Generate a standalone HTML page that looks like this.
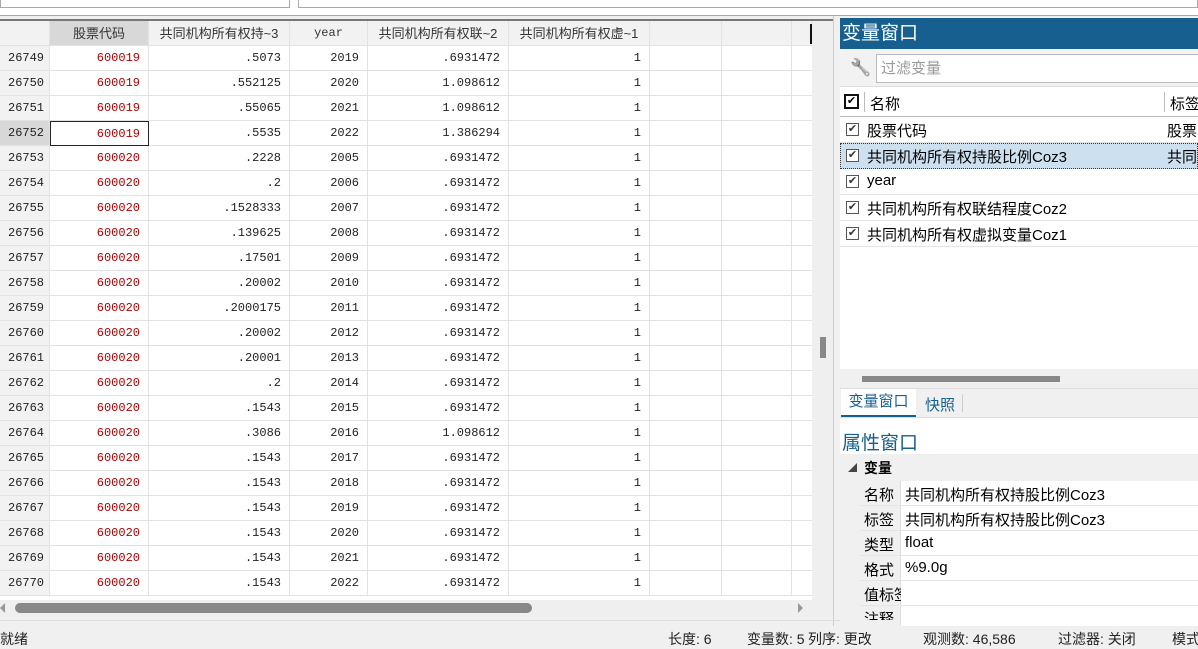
<!DOCTYPE html>
<html><head><meta charset="utf-8"><style>
*{margin:0;padding:0;box-sizing:border-box}
body{width:1198px;height:646px;background:#f0f0f0;position:relative;overflow:hidden;font-family:"Liberation Sans","Noto Sans CJK SC",sans-serif}
.a{position:absolute;white-space:nowrap}
.mono{font-family:"Liberation Mono","Noto Sans CJK SC",monospace;font-size:12px}
.cell{position:absolute;height:25px;line-height:25px;border-right:1px solid #e2e2e2;border-bottom:1px solid #e2e2e2;text-align:right;padding-right:8px;background:#fff;color:#222}
.hd{background:#f2f2f2;text-align:center;padding:0;font-size:13px;color:#333}
.rn{background:#f2f2f2;text-align:left;padding-left:8px}
.cb{position:absolute;width:13px;height:13px;border:1px solid #555;background:#fff;font-size:11px;line-height:11px;text-align:center;color:#333}
.rt{position:absolute;left:840px;width:358px;font-size:14px;color:#222}
.st{position:absolute;top:629px;font-size:14px;color:#222;white-space:nowrap}
</style></head><body>
<div class="a" style="left:0;top:0;width:1198px;height:16px;background:#fff;border-bottom:1px solid #aaa"></div>
<div class="a" style="left:0;top:0;width:290px;height:8px;border:1px solid #aaa;border-top:none;background:#fff"></div>
<div class="a" style="left:298px;top:0;width:900px;height:8px;border:1px solid #aaa;border-top:none;background:#fff"></div>
<div class="a" style="left:0;top:19px;width:833px;height:2px;background:#777"></div>
<div class="a" style="left:0;top:21px;width:812px;height:579px;background:#fff;overflow:hidden" id="g">
<div class="cell hd rn" style="left:0;top:0;width:50px"></div>
<div class="cell hd" style="left:50px;top:0;width:99px;background:#d8d8d8">股票代码</div>
<div class="cell hd" style="left:149px;top:0;width:141px">共同机构所有权持~3</div>
<div class="cell hd mono" style="left:290px;top:0;width:78px;font-size:12px">year</div>
<div class="cell hd" style="left:368px;top:0;width:141px">共同机构所有权联~2</div>
<div class="cell hd" style="left:509px;top:0;width:141px">共同机构所有权虚~1</div>
<div class="cell hd" style="left:650px;top:0;width:72px"></div>
<div class="cell hd" style="left:722px;top:0;width:70px"></div>
<div class="cell hd" style="left:792px;top:0;width:20px"></div>
<div class="a" style="left:810px;top:3px;width:2px;height:20px;background:#111"></div>
</div>
<div class="a" style="left:812px;top:21px;width:21px;height:579px;background:#efefef"></div>
<div class="a" style="left:820px;top:337px;width:6px;height:21px;background:#888"></div>
<div class="a" style="left:833px;top:16px;width:7px;height:610px;background:#f0f0f0;border-left:1px solid #ccc"></div>
<div class="a" style="left:0;top:600px;width:833px;height:17px;background:#efefef"></div>
<div class="a" style="left:15px;top:603px;width:517px;height:10px;background:#888;border-radius:5px"></div>
<div class="a" style="left:0;top:603px;width:0;height:0;border-top:5px solid transparent;border-bottom:5px solid transparent;border-right:5px solid #999"></div>
<div class="a" style="left:798px;top:603px;width:0;height:0;border-top:5px solid transparent;border-bottom:5px solid transparent;border-left:5px solid #999"></div>
<div class="a" style="left:0;top:620px;width:1198px;height:1px;background:#ddd"></div>
<div class="st" style="left:0">就绪</div>
<div class="st" style="left:668px">长度: 6</div>
<div class="st" style="left:747px">变量数: 5</div>
<div class="st" style="left:808px">列序: 更改</div>
<div class="st" style="left:923px">观测数: 46,586</div>
<div class="st" style="left:1058px">过滤器: 关闭</div>
<div class="st" style="left:1172px">模式</div>
<div class="a" style="left:840px;top:18px;width:358px;height:608px;background:#fff"></div>
<div class="rt" style="top:18px;height:31px;background:#165f8f;color:#fff;font-size:19px;line-height:31px;padding-left:2px">变量窗口</div>
<div class="rt" style="top:49px;height:38px;background:#f2f2f2;border-bottom:1px solid #ddd"></div>
<div class="a" style="left:850px;top:58px;font-size:17px;color:#888;filter:grayscale(1)">🔧</div>
<div class="a" style="left:876px;top:54px;width:330px;height:29px;border:1px solid #bbb;background:#fff;font-size:15px;color:#999;line-height:27px;padding-left:4px">过滤变量</div>
<div class="rt" style="top:88px;height:29px;border-bottom:1px solid #bbb"></div>
<div class="cb" style="left:844px;top:94px;border:2px solid #111;width:15px;height:15px;color:#000">✔</div>
<div class="a" style="left:864px;top:92px;width:1px;height:20px;background:#bbb"></div>
<div class="a" style="left:870px;top:93px;font-size:15px">名称</div>
<div class="a" style="left:1164px;top:92px;width:1px;height:20px;background:#bbb"></div>
<div class="a" style="left:1170px;top:93px;font-size:15px">标签</div>
<div class="rt" style="top:143px;height:26px;background:#cde0f0;border:1px dotted #333"></div>
<div class="rt" style="top:117px;height:26px;border-bottom:1px solid #e5e5e5"></div>
<div class="rt" style="top:169px;height:26px;border-bottom:1px solid #e5e5e5"></div>
<div class="rt" style="top:195px;height:26px;border-bottom:1px solid #e5e5e5"></div>
<div class="rt" style="top:221px;height:26px;border-bottom:1px solid #e5e5e5"></div>
<div class="cb" style="left:846px;top:123px">✔</div><div class="a" style="left:867px;top:120px;font-size:15px">股票代码</div><div class="a" style="left:1167px;top:120px;font-size:15px">股票</div>
<div class="cb" style="left:846px;top:149px">✔</div><div class="a" style="left:867px;top:146px;font-size:15px">共同机构所有权持股比例Coz3</div><div class="a" style="left:1167px;top:146px;font-size:15px">共同</div>
<div class="cb" style="left:846px;top:175px">✔</div><div class="a" style="left:867px;top:172px;font-size:15px">year</div>
<div class="cb" style="left:846px;top:201px">✔</div><div class="a" style="left:867px;top:198px;font-size:15px">共同机构所有权联结程度Coz2</div>
<div class="cb" style="left:846px;top:227px">✔</div><div class="a" style="left:867px;top:224px;font-size:15px">共同机构所有权虚拟变量Coz1</div>
<div class="rt" style="top:369px;height:19px;background:#f0f0f0"></div>
<div class="a" style="left:862px;top:376px;width:198px;height:6px;background:#888"></div>
<div class="rt" style="top:388px;height:30px;background:#f0f0f0;border-top:1px solid #ddd;border-bottom:1px solid #ddd"></div>
<div class="a" style="left:841px;top:389px;width:75px;height:28px;background:#fff;border-bottom:2px solid #165f8f;color:#165f8f;font-size:15px;line-height:26px;text-align:center">变量窗口</div>
<div class="a" style="left:925px;top:394px;font-size:15px;color:#165f8f">快照</div>
<div class="a" style="left:962px;top:394px;width:1px;height:18px;background:#ccc"></div>
<div class="a" style="left:842px;top:428px;font-size:19px;color:#165f8f">属性窗口</div>
<div class="rt" style="top:454px;height:172px;background:#f0f0f0"></div>
<div class="a" style="left:848px;top:461px;font-size:9px;color:#444">◢</div>
<div class="a" style="left:864px;top:458px;font-size:14px;font-weight:bold">变量</div>
<div class="a" style="left:860px;top:481px;width:338px;height:145px;background:#fff"></div>
<div class="a" style="left:860px;top:481px;width:41px;height:145px;background:#f0f0f0;border-right:1px solid #ddd"></div>
<div class="a" style="left:860px;top:505px;width:338px;height:1px;background:#e5e5e5"></div>
<div class="a" style="left:860px;top:530px;width:338px;height:1px;background:#e5e5e5"></div>
<div class="a" style="left:860px;top:555px;width:338px;height:1px;background:#e5e5e5"></div>
<div class="a" style="left:860px;top:580px;width:338px;height:1px;background:#e5e5e5"></div>
<div class="a" style="left:860px;top:605px;width:338px;height:1px;background:#e5e5e5"></div>
<div class="a" style="left:864px;top:484px;font-size:15px">名称</div><div class="a" style="left:905px;top:484px;font-size:15px">共同机构所有权持股比例Coz3</div>
<div class="a" style="left:864px;top:509px;font-size:15px">标签</div><div class="a" style="left:905px;top:509px;font-size:15px">共同机构所有权持股比例Coz3</div>
<div class="a" style="left:864px;top:534px;font-size:15px">类型</div><div class="a" style="left:905px;top:534px;font-size:15px">float</div>
<div class="a" style="left:864px;top:559px;font-size:15px">格式</div><div class="a" style="left:905px;top:559px;font-size:15px">%9.0g</div>
<div class="a" style="left:864px;top:584px;width:37px;overflow:hidden;font-size:15px">值标签</div>
<div class="a" style="left:864px;top:608px;height:12px;overflow:hidden;font-size:15px">注释</div>
<script>
var g=document.getElementById('g');
var c2=['.5073','.552125','.55065','.5535','.2228','.2','.1528333','.139625','.17501','.20002','.2000175','.20002','.20001','.2','.1543','.3086','.1543','.1543','.1543','.1543','.1543','.1543'];
var c4=['.6931472','1.098612','1.098612','1.386294','.6931472','.6931472','.6931472','.6931472','.6931472','.6931472','.6931472','.6931472','.6931472','.6931472','.6931472','1.098612','.6931472','.6931472','.6931472','.6931472','.6931472','.6931472'];
var yr=[2019,2020,2021,2022,2005,2006,2007,2008,2009,2010,2011,2012,2013,2014,2015,2016,2017,2018,2019,2020,2021,2022];
var h='';
for(var i=0;i<22;i++){var t=25+i*25;
h+='<div class="cell rn mono" style="left:0;top:'+t+'px;width:50px;'+(i==3?'background:#d8d8d8':'')+'">'+(26749+i)+'</div>';
h+='<div class="cell mono" style="left:50px;top:'+t+'px;width:99px;color:#b00000;'+(i==3?'border:1px solid #222':'')+'">'+(i<4?'600019':'600020')+'</div>';
h+='<div class="cell mono" style="left:149px;top:'+t+'px;width:141px">'+c2[i]+'</div>';
h+='<div class="cell mono" style="left:290px;top:'+t+'px;width:78px">'+yr[i]+'</div>';
h+='<div class="cell mono" style="left:368px;top:'+t+'px;width:141px">'+c4[i]+'</div>';
h+='<div class="cell mono" style="left:509px;top:'+t+'px;width:141px">1</div>';
h+='<div class="cell" style="left:650px;top:'+t+'px;width:72px"></div><div class="cell" style="left:722px;top:'+t+'px;width:70px"></div><div class="cell" style="left:792px;top:'+t+'px;width:20px;border-right:none"></div>';}
g.insertAdjacentHTML('beforeend',h);
</script>
</body></html>
